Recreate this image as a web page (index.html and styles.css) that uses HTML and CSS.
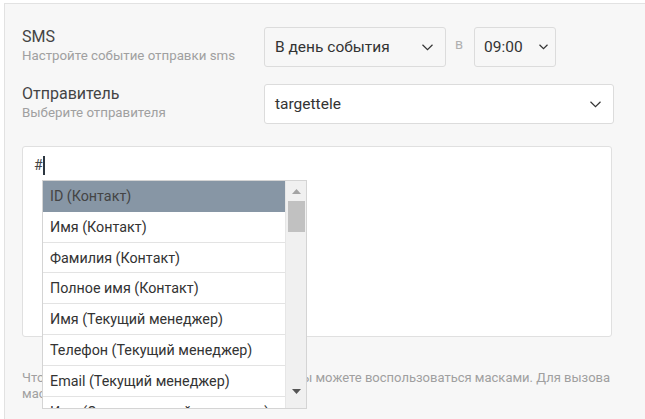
FILE: index.html
```html
<!DOCTYPE html>
<html>
  <head lang="ru">
    <meta charset="UTF-8" />
    <title>SMS</title>
    <link rel="stylesheet" href="styles.css">
  </head>

  <body>
    <div class="panel">
      <div class="row row-event">
        <div class="label">
          <div class="title">SMS</div>
          <div class="hint">Настройте событие отправки sms</div>
        </div>
        <div class="controls">
          <div class="select select-day">
            <span>В день события</span>
            <svg class="chev" width="11" height="7" viewBox="0 0 11 7"><path d="M0.5 0.8 L5.5 5.6 L10.5 0.8" /></svg>
          </div>
          <span class="at">в</span>
          <div class="select select-time">
            <span>09:00</span>
            <svg class="chev small" width="9" height="6" viewBox="0 0 9 6"><path d="M0.5 0.8 L4.5 4.6 L8.5 0.8" /></svg>
          </div>
        </div>
      </div>

      <div class="row row-sender">
        <div class="label">
          <div class="title">Отправитель</div>
          <div class="hint">Выберите отправителя</div>
        </div>
        <div class="select select-sender">
          <span>targettele</span>
          <svg class="chev" width="11" height="7" viewBox="0 0 11 7"><path d="M0.5 0.8 L5.5 5.6 L10.5 0.8" /></svg>
        </div>
      </div>

      <div class="editor">
        <div class="text">#<span class="caret"></span></div>
        <div class="masks">
          <ul class="mask-list">
            <li class="current">ID (Контакт)</li>
            <li>Имя (Контакт)</li>
            <li>Фамилия (Контакт)</li>
            <li>Полное имя (Контакт)</li>
            <li>Имя (Текущий менеджер)</li>
            <li>Телефон (Текущий менеджер)</li>
            <li>Email (Текущий менеджер)</li>
            <li>Имя (Ответственный менеджер)</li>
          </ul>
          <div class="scroll">
            <svg class="arrow" width="9" height="5" viewBox="0 0 9 5"><path d="M0 5 L4.5 0 L9 5 Z" /></svg>
            <div class="thumb"></div>
            <div class="track"></div>
            <svg class="arrow down" width="9" height="5" viewBox="0 0 9 5"><path d="M0 0 L9 0 L4.5 5 Z" /></svg>
          </div>
        </div>
      </div>

      <p class="note">Чтобы вставить данные в текст сообщения, вы можете воспользоваться масками. Для вызова<br>масок введите символ #</p>
    </div>
  </body>
</html>
```

FILE: styles.css
```css
body,
div,
ul,
li,
p {
  margin: 0;
  padding: 0;
}

ul {
  list-style-type: none;
}

body {
  background: #fff;
  font: 15px/20px Roboto, "Noto Sans", sans-serif;
  color: #333;
  overflow: hidden;
  height: 419px;
}

.panel {
  margin: 3px 0 0 4px;
  height: 500px;
  background: #f7f7f7;
  border-top: 1px solid #e2e2e2;
  border-left: 1px solid #e2e2e2;
  padding: 23px 0 0 17px;
}

.row {
  display: flex;
  align-items: flex-start;
}

.row-sender {
  margin-top: 17px;
}

.label {
  width: 242px;
}

.title {
  font-size: 16px;
  line-height: 20px;
  color: #444;
}

.hint {
  font-size: 13.3px;
  line-height: 18px;
  color: #a0a0a0;
}

.controls {
  display: flex;
  align-items: center;
}

.select {
  display: flex;
  align-items: center;
  justify-content: space-between;
  border: 1px solid #dcdcdc;
  border-radius: 3px;
  background: #f7f7f7;
  box-sizing: border-box;
  height: 40px;
  padding: 0 12px 0 10px;
  font-size: 15.5px;
  color: #333;
}

.select-day {
  width: 182px;
}

.select-time {
  width: 82px;
  padding: 0 7px 0 9px;
}

.select-sender {
  width: 350px;
  background: #fff;
}

.chev {
  fill: none;
  stroke: #333;
  stroke-width: 1.2;
}

.at {
  font-size: 14px;
  color: #b0b0b0;
  margin: -6px 11px 0 9px;
}

.editor {
  position: relative;
  margin-top: 22px;
  width: 590px;
  height: 191px;
  box-sizing: border-box;
  background: #fff;
  border: 1px solid #e0e0e0;
  border-radius: 3px;
  padding: 8px 11px;
}

.text {
  font-size: 14px;
  line-height: 20px;
  color: #444;
  display: flex;
  align-items: center;
}

.caret {
  display: inline-block;
  width: 2px;
  height: 19px;
  background: #2c3640;
}

.masks {
  position: absolute;
  top: 33px;
  left: 19px;
  width: 263px;
  height: 227px;
  overflow: hidden;
  background: #fff;
  border: 1px solid #d4d4d4;
  display: flex;
  z-index: 2;
}

.mask-list {
  flex: 1;
}

.mask-list li {
  height: 29.8px;
  line-height: 30px;
  padding-left: 7px;
  border-bottom: 1px solid #e3e3e3;
  font-size: 14.3px;
  color: #333;
  white-space: nowrap;
  overflow: hidden;
}

.mask-list li.current {
  background: #8796a5;
  color: #444;
  border-bottom-color: #8796a5;
}

.scroll {
  width: 21px;
  background: #f0f0f0;
  border-left: 1px solid #e6e6e6;
  display: flex;
  flex-direction: column;
  align-items: center;
  padding-top: 8px;
  box-sizing: border-box;
}

.arrow {
  fill: #a3a3a3;
}

.arrow.down {
  fill: #555;
}

.thumb {
  width: 17px;
  height: 31px;
  margin-top: 7px;
  background: #c1c1c1;
}

.track {
  height: 157px;
}

.note {
  margin-top: 33px;
  width: 620px;
  font-size: 13px;
  line-height: 16px;
  color: #a0a0a0;
}
```
